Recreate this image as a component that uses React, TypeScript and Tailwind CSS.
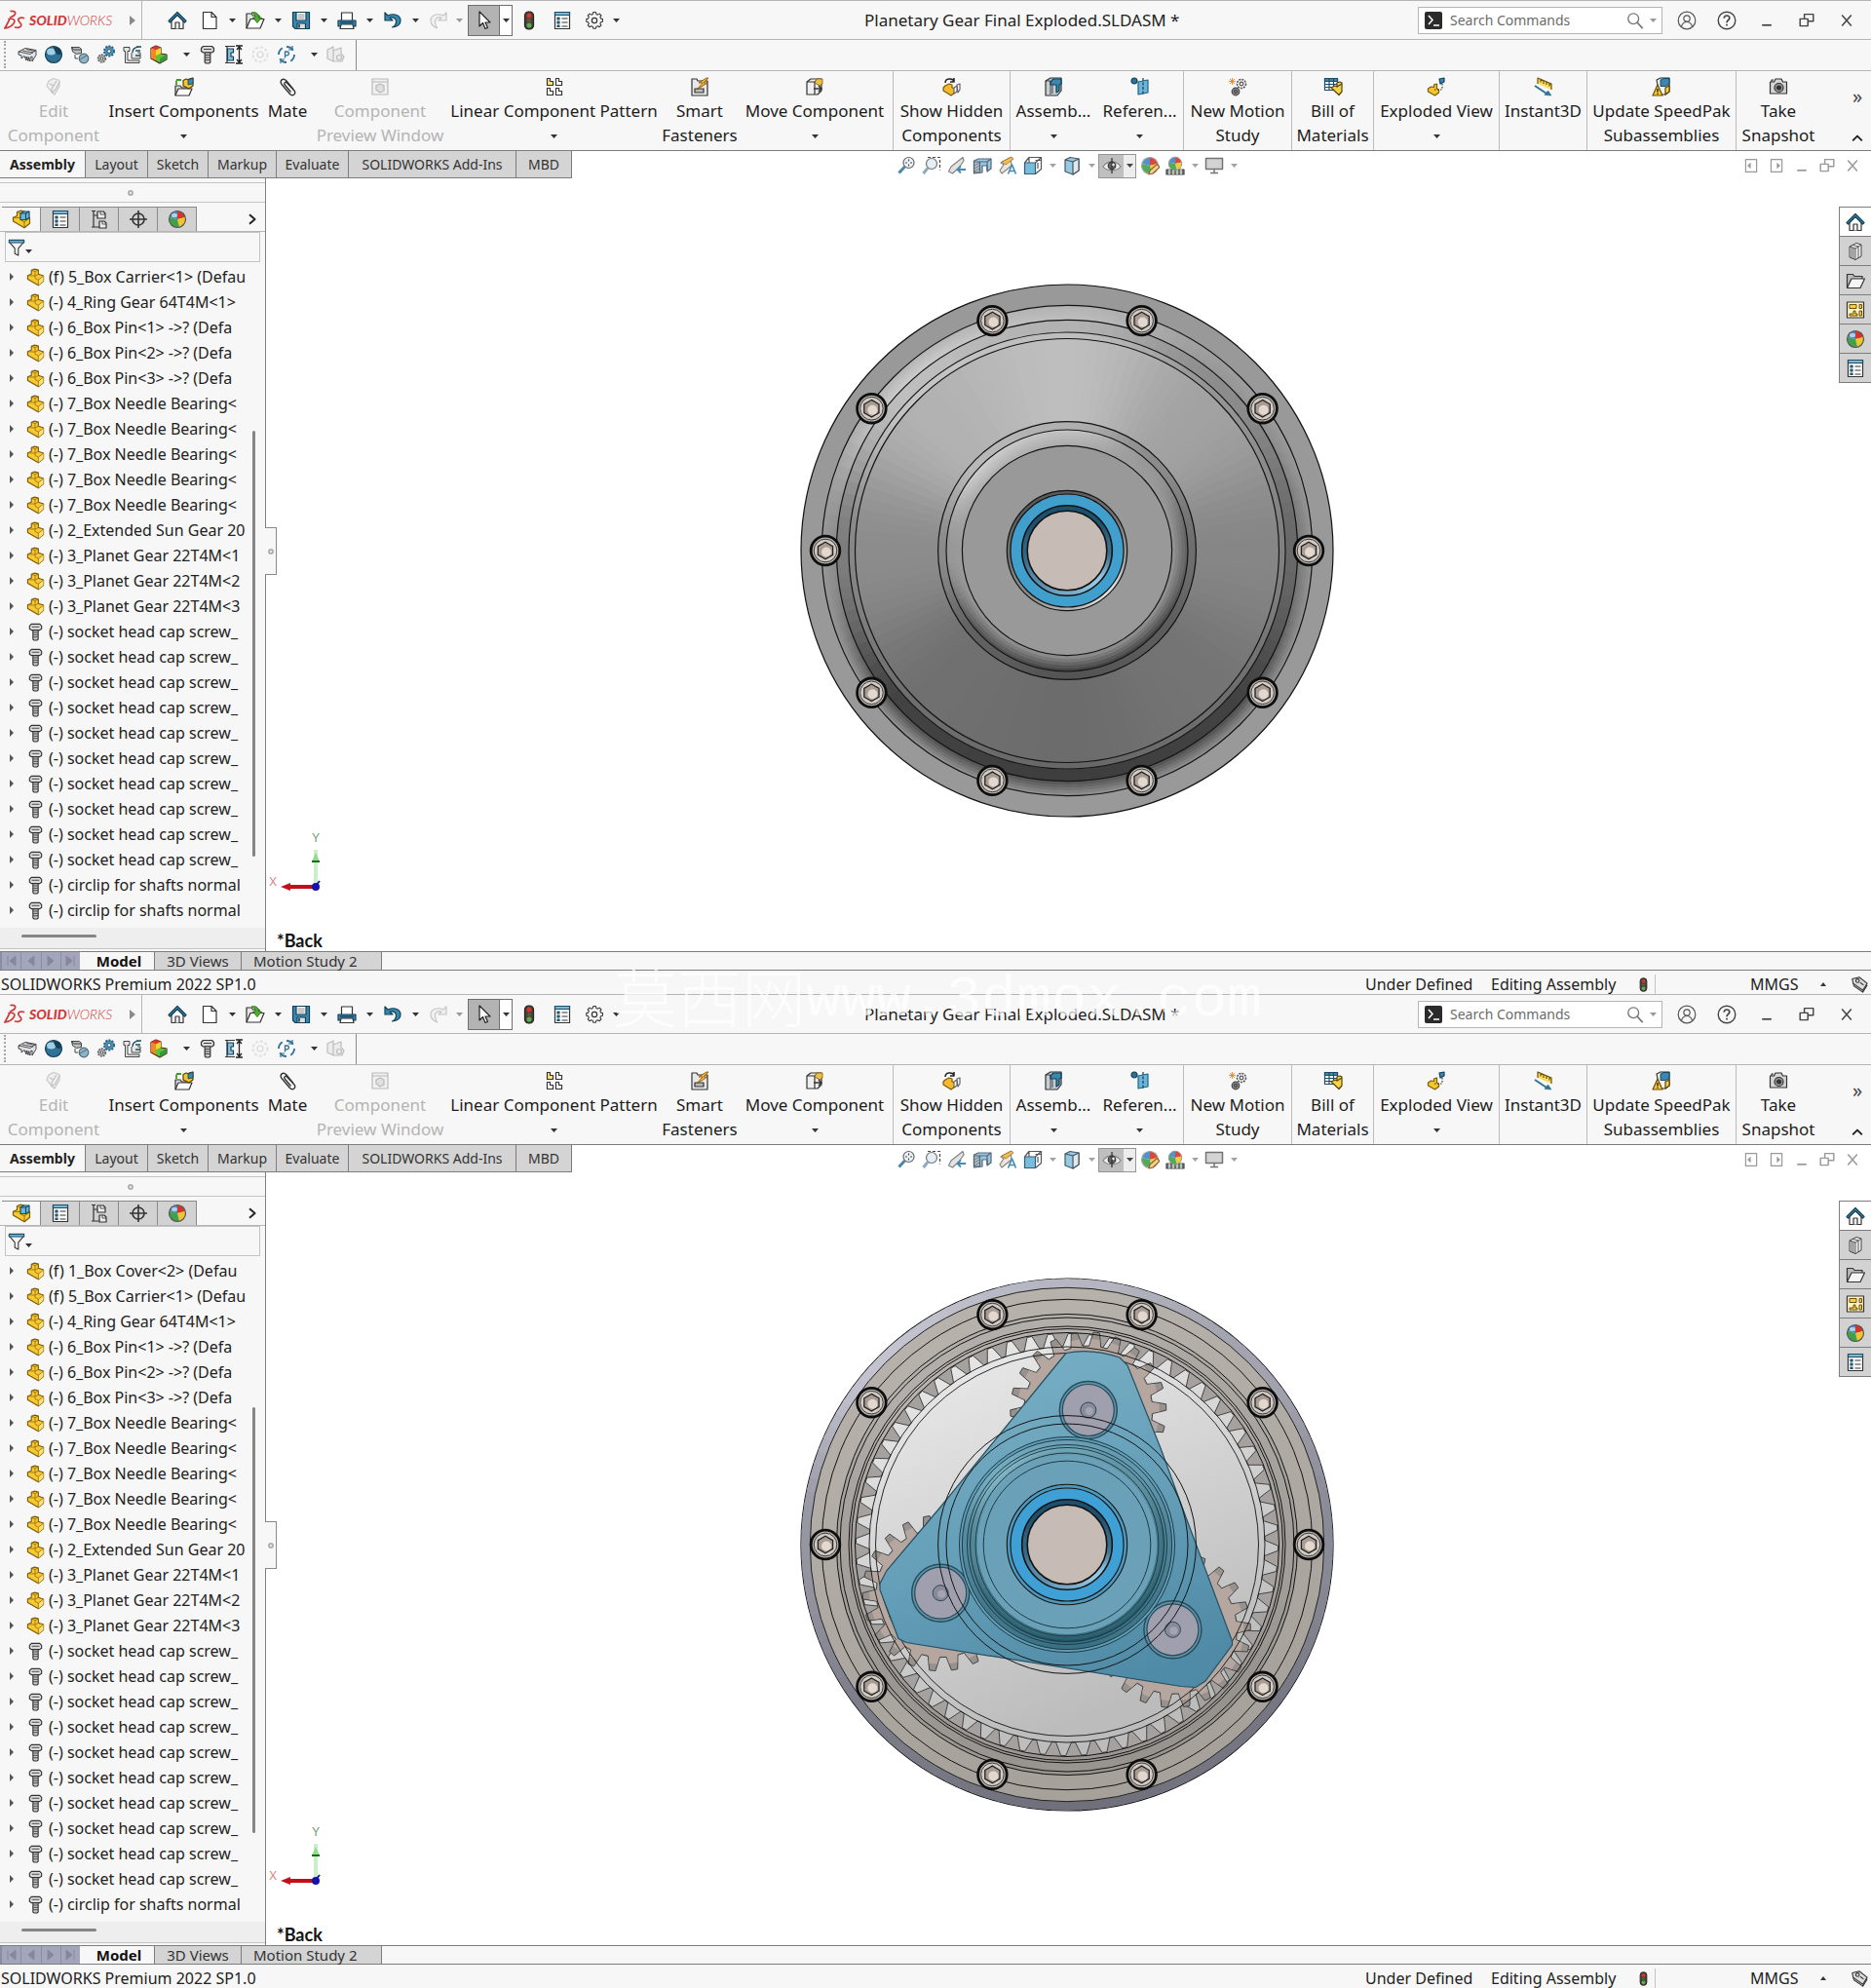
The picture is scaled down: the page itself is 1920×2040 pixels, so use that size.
import type { ReactNode } from "react";
import clsx from "clsx";

/* ---------- icons ---------- */

interface SvgProps {
  size?: number;
  children: ReactNode;
}

function Svg({ size = 20, children }: SvgProps) {
  return (
    <svg
      width={size}
      height={size}
      viewBox="0 0 20 20"
      fill="none"
      stroke="#333"
      strokeWidth="1.2"
      strokeLinejoin="round"
      className="shrink-0"
      aria-hidden="true"
    >
      {children}
    </svg>
  );
}

const partBody = "M5.5 2.5 9 1.2l4 1v4.3l5.5 2v5.7L13 18.8 1.500 12V8.2l4-1.7z";
const partEdges = "M5.500 2.500l4 1.300v4.700L1.500 8.200M9.500 3.800 13 2.200M9.500 8.500l4-2M13 18.800v-6L9.500 11V8.500M13 12.800l5.500-4.300";

const Part = ({ size = 19 }: { size?: number }) => (
  <Svg size={size}>
    <path d={partBody} fill="#f7c92f" stroke="#7d5a08" />
    <path d="M13 12.800l5.500-4.300v5.700L13 18.800z" fill="#fbe07a" stroke="none" />
    <path d={partEdges} stroke="#8f6a12" strokeWidth=".8" />
  </Svg>
);

const AssemblyPart = () => (
  <Svg size={20}>
    <path d={partBody} fill="#f7c92f" stroke="#7d5a08" />
    <path d={partEdges} stroke="#7d5a08" strokeWidth=".8" />
    <path d="M9 4l3.500-2H18v6.500l-3.500 2H9z" fill="#6fb7dc" stroke="#174a63" />
    <path d="M9 4h5.500v6.500M14.500 4 18 2" stroke="#174a63" />
  </Svg>
);

const Screw = ({ size = 20 }: { size?: number }) => (
  <Svg size={size}>
    <path d="M3.500 3.500 5.500 1.500h9l2 2v3l-2 1.500h-9l-2-1.500z" fill="#dadada" />
    <path d="M6 4.500h8" strokeWidth=".9" />
    <path d="M7.200 8h5.600v10l-1.300 1h-3l-1.300-1z" fill="#c9c9c9" />
    <path d="M7.500 10.500h5M7.500 13h5M7.500 15.500h5" strokeWidth=".9" />
  </Svg>
);

const Home = () => (
  <Svg>
    <path d="M4 10v8.500h12V10l-6-6z" fill="#fff" />
    <path d="M8 18.500V12h4v6.500" fill="#f1f1f1" />
    <path d="M1 10.500 10 1.500l9 9-1.500 1.500L10 4.500 2.500 12z" fill="#3f8fb5" stroke="#123f55" />
  </Svg>
);

const NewDoc = () => (
  <Svg>
    <path d="M3.500 1.500H12l5 5v12H3.500z" fill="#fff" />
    <path d="M12 1.500v5h5" />
  </Svg>
);

const OpenDoc = () => (
  <Svg>
    <path d="M1 18V3h5l1.500 2H14v4" fill="#e5e5e5" />
    <path d="M1 18 5 8.500h14L15 18z" fill="#fff" />
    <path d="M6 2c4-1 7 0 7.500 5h3L12 12.500 7.500 7H10C10 4 8.500 2.500 6 2z" fill="#4fae2c" stroke="#22640e" strokeWidth=".8" />
  </Svg>
);

const Save = () => (
  <Svg>
    <path d="M1.500 1.500h17v17H4l-2.500-2.500z" fill="#3a87b0" stroke="#123f55" />
    <path d="M5 1.500h10V10H5z" fill="#fff" stroke="#123f55" />
    <path d="M6.500 4h7M6.500 6h7M6.500 8h7" stroke="#777" strokeWidth=".8" />
    <path d="M6 13h8.500v5.500H6z" fill="#ddd" stroke="#123f55" />
    <path d="M8 14v3.500" stroke="#123f55" strokeWidth="1.600" />
  </Svg>
);

const Print = () => (
  <Svg>
    <path d="M4.500 10V2h11v8" fill="#fff" />
    <path d="M1 10h18v6H1z" fill="#3a87b0" stroke="#123f55" />
    <path d="M4 14h12l1 4.500H3z" fill="#fff" />
    <path d="M3 12h14" stroke="#123f55" />
  </Svg>
);

const Undo = () => (
  <Svg>
    <path d="M2 2v8h8L7 7.200c4-1 7 1 6.500 4.800-.3 2.500-2 4-4 5 5-.5 8.500-3 8.500-7C18 5 12 2 5 5z" fill="#3a87b0" stroke="#123f55" />
  </Svg>
);

const Redo = () => (
  <Svg>
    <path d="M18 2v8h-8l3-2.800c-4-1-7 1-6.500 4.800.3 2.500 1 4 2 6-4-1.500-6.500-4-6.500-8C2 5 8 2 15 5z" fill="#f0f0f0" stroke="#c6c6c6" />
  </Svg>
);

const Cursor = () => (
  <Svg>
    <path d="M5 1v15l3.500-3.500 2.500 6 2.500-1-2.500-5.500h5z" fill="#fff" stroke="#222" />
  </Svg>
);

const Traffic = ({ size = 20 }: { size?: number }) => (
  <Svg size={size}>
    <rect x="5.500" y="1" width="9" height="18" rx="4" fill="#4a4238" stroke="#222" />
    <circle cx="10" cy="5" r="2.500" fill="#d8342a" stroke="none" />
    <circle cx="10" cy="10" r="2" fill="#5f5640" stroke="none" />
    <circle cx="10" cy="15" r="2.500" fill="#58b04a" stroke="none" />
  </Svg>
);

const OptionList = () => (
  <Svg>
    <path d="M2.500 1.500h15v17h-15z" fill="#fff" />
    <path d="M2.500 1.500h15v3h-15z" fill="#7db9d6" stroke="#1d4e66" />
    <path d="M5 7h2v2H5zM5 11h2v2H5zM5 15h2v1.500H5z" fill="#3a87b0" stroke="#1d4e66" />
    <path d="M9.500 8h6M9.500 12h6M9.500 16h6" />
  </Svg>
);

const gearOutline =
  "M8.500 1.500h3l.5 2.200 1.800.8 2-1.200 2 2-1.200 2 .8 1.700 2.100.5v3l-2.100.5-.8 1.800 1.200 2-2 2-2-1.200-1.800.8-.5 2.100h-3l-.5-2.100-1.800-.8-2 1.200-2-2 1.200-2-.8-1.800L.5 12.500v-3L2.600 9l.8-1.700-1.200-2 2-2 2 1.200L8 3.700z";

const Gear = () => (
  <Svg>
    <path d={gearOutline} fill="#f3f3f3" transform="translate(1.300 .2) scale(.88)" />
    <circle cx="10" cy="10" r="2.600" fill="#fff" />
  </Svg>
);

const HeatSink = () => (
  <Svg>
    <path d="M1 7 8 3.500l11 2v5L15 17v-5l-2 1v4l-2-4.500v4L9 12v4l-2-4.500L4 14v-3L1 10z" fill="#dfe3e5" strokeWidth=".9" />
    <path d="M1 7l12 2.500 6-4M5 6l11 2M9 4.500 18 6.500" strokeWidth=".8" />
  </Svg>
);

const Sphere = () => (
  <Svg>
    <circle cx="10" cy="10" r="8.500" fill="#2f7197" stroke="#123f55" />
    <ellipse cx="7.500" cy="7" rx="4.500" ry="3.500" fill="#9fd0e6" stroke="none" />
    <path d="M10 2c5 0 8 3 8 7-3 3-7 0-8-7z" fill="#173f57" stroke="none" />
  </Svg>
);

const MassShapes = () => (
  <Svg>
    <path d="M1.500 2.500h8l2 2v4l-5 1-4-2.500z" fill="#b9c0c4" strokeWidth=".9" />
    <path d="M1.500 2.500l2 2.500h8" strokeWidth=".9" />
    <circle cx="14" cy="14" r="4.800" fill="#8fb4c6" stroke="#4d6d7c" />
    <path d="M10 15l7-4" stroke="#5d7d8c" />
    <path d="M5 10v4h3" strokeWidth=".9" />
  </Svg>
);

const TwoGears = () => (
  <Svg>
    <circle cx="13" cy="6.500" r="5" fill="#4b93b8" stroke="#2a6485" strokeWidth="2" strokeDasharray="2 1.200" />
    <circle cx="13" cy="6.500" r="1.800" fill="#fff" strokeWidth=".8" />
    <circle cx="5.500" cy="14" r="3.800" fill="#b3b3b3" stroke="#666" strokeWidth="1.800" strokeDasharray="1.800 1" />
    <circle cx="5.500" cy="14" r="1.300" fill="#fff" strokeWidth=".8" />
  </Svg>
);

const Clamp = () => (
  <Svg>
    <path d="M1 2.500h6v4H5V16h12v2.500H2.500V6.500H1zM9 8v6h9V8h-3" fill="#e6e6e6" strokeWidth=".9" />
    <path d="M18 2c-5 0-8 2-8 6M14 2h5M18 6h-5M18 11h-5" stroke="#1d4e66" strokeWidth="1.400" />
  </Svg>
);

const RainbowPart = () => (
  <Svg>
    <path d="M2 3.500 7 1l5 2v6l6 1v5l-7 4-9-5z" fill="#5fc23a" stroke="#5e1c10" />
    <path d="M2 3.500 7 1l5 2-5 2.500z" fill="#e4342a" stroke="none" />
    <path d="M2 3.500l5 2V16l-5-2.500z" fill="#f08b24" stroke="none" />
    <path d="M7 5.500 12 3v6l-5 2z" fill="#f3d52d" stroke="none" />
    <path d="M11 14l7-4v5l-7 4z" fill="#2f9a3a" stroke="none" />
  </Svg>
);

const FitHeight = () => (
  <Svg>
    <path d="M1 1.500h10M1 18.500h10M3 1.500v17" />
    <path d="M3.500 4h6v4H7v4h2.500v4h-6z" fill="#8cc0da" stroke="#123f55" />
    <path d="M15.500 2v16M13 5l2.500-3 2.500 3M13 15l2.500 3 2.500-3M12 1h7M12 19h7" stroke="#222" strokeWidth="1.300" />
  </Svg>
);

const FaintPlate = () => (
  <Svg>
    <circle cx="10" cy="10" r="7.500" stroke="#e0e0e0" strokeDasharray="3 2" strokeWidth="2" />
    <circle cx="10" cy="10" r="3" stroke="#d6d6d6" />
  </Svg>
);

const CycleP = () => (
  <Svg>
    <circle cx="10" cy="10" r="8" stroke="#2f7197" strokeWidth="1.800" strokeDasharray="8 4.500" />
    <path d="M8.500 13.500V7h2a1.800 1.800 0 0 1 0 3.800h-2" stroke="#2f7197" strokeWidth="1.300" />
    <path d="M16 1v4h-4M4 19v-4h4" stroke="#2f7197" />
  </Svg>
);

const FaintPart = () => (
  <Svg>
    <path d="M2 5l6-3v15l-6-3zM8 6l8-3v6l3 3-2 5H8z" fill="#ececec" stroke="#bdbdbd" />
    <circle cx="14" cy="13" r="2.500" stroke="#bdbdbd" />
  </Svg>
);

const EditPart = () => (
  <Svg>
    <path d="M5 4l5-2.500 6 2v6L11 18l-5-5-3-4z" fill="#efefef" stroke="#c9c9c9" />
    <path d="M13 4l-5 8v4l4-3 4-8M6 7l4 2" stroke="#c0c0c0" />
  </Svg>
);

const InsertPart = () => (
  <Svg>
    <path d="M1 19V9h5l1.500 2H15v3" fill="#ddd" />
    <path d="M1 19l3-7h14l-3 7z" fill="#fff" />
    <path d="M9 3.500 12 2l3 1V2l4-1v8l-4 3-6-3z" fill="#f5c62c" stroke="#5b4205" />
    <path d="M14 3l5-2v6l-5 1z" fill="#3a87b0" stroke="#123f55" strokeWidth=".8" />
    <path d="M2 8V3.500M2 3h5" stroke="#3f9a25" strokeWidth="1.800" />
  </Svg>
);

const Clip = () => (
  <Svg>
    <path
      d="M16 12.500 8.500 3.500C5.500.500 1.500 3.500 4 7.500l8.500 10c3 3 7-.5 4.500-3.500L9.500 6C8 4.500 6 6 7.200 8l6.300 7.500"
      stroke="#333"
      strokeWidth="1.400"
    />
  </Svg>
);

const PreviewWin = () => (
  <Svg>
    <path d="M2 2h16v16H2zM2 5h16" fill="#f0f0f0" stroke="#b9b9b9" />
    <path d="M6 9l4-2 4 2v5l-4 2-4-3z" fill="#e0e0e0" stroke="#b9b9b9" />
  </Svg>
);

const Pattern = () => (
  <Svg>
    <path d="M2.500 1.500h3v3h3v4h-6z" fill="#ffe37a" />
    <path d="M11.500 1.500h3v3h3v4h-6zM2.500 11.500h3v3h3v4h-6zM11.500 11.500h3v3h3v4h-6z" fill="#fff" />
  </Svg>
);

const SmartFast = () => (
  <Svg>
    <path d="M2 2h5l1 2h10v15H2z" fill="#e8e8e8" />
    <path d="M5 12h9v4H5z" fill="#bbb" />
    <path d="M17 1 9 6h4l-6 7 11-7h-4l5-5z" fill="#f5b82c" stroke="#7d4a08" strokeWidth=".8" />
  </Svg>
);

const MovePart = () => (
  <Svg>
    <path d="M2 5l4-3h11v12l-4 4H2z" fill="#efefef" />
    <path d="M2 5h8v13M10 5l4-3" />
    <path d="M12 2h6v5l-3 2-5-3z" fill="#e9bf45" stroke="#7d5a08" strokeWidth=".8" />
    <path d="M9 12h8M14 9l3 3-3 3" strokeWidth="1.500" />
  </Svg>
);

const ShowHidden = () => (
  <Svg>
    <path d="M3 9l4-2 3 1v3l3 1v4l-4 3-8-5v-3z" fill="#f5b92c" stroke="#7d5a08" />
    <path d="M12 11l3-2v6l-3 2zM15 8l3-1v6l-2 3z" fill="#fff" stroke="#666" />
    <path d="M3 6c0-5 7-5 9-2M12 1v4H8" strokeWidth="1.500" stroke="#222" />
  </Svg>
);

const AsmFeature = () => (
  <Svg>
    <path d="M2 4l5-3h11v13l-4 5H2z" fill="#c6cfd4" />
    <path d="M7 5l3-3h8v5l-2 1v6l-3 2V8H7z" fill="#3a87b0" stroke="#123f55" />
    <path d="M2 4h5v14M9 8v9" strokeWidth=".9" />
  </Svg>
);

const RefGeom = () => (
  <Svg>
    <circle cx="4" cy="4" r="3" fill="#2f7197" stroke="#123f55" />
    <path d="M8 5l10-2v13L8 18z" fill="#6cb5d8" stroke="#1d6488" />
    <path d="M13 1v18" stroke="#123f55" strokeDasharray="3 1.500" />
  </Svg>
);

const Motion = () => (
  <Svg>
    <circle cx="14" cy="7" r="4.500" fill="#f4f4f4" stroke="#555" strokeWidth="1.600" strokeDasharray="2 1" />
    <circle cx="14" cy="7" r="1.800" stroke="#555" />
    <circle cx="8" cy="15" r="3.800" fill="#888" stroke="#444" />
    <circle cx="8" cy="15" r="1.300" fill="#ddd" />
    <path d="M4.500 1v7M1 4.500h7M2 2l5 5M7 2 2 7" stroke="#e08830" strokeWidth=".9" />
  </Svg>
);

const Bom = () => (
  <Svg>
    <path d="M1.500 1.500h13v12h-13z" fill="#fff" stroke="#1d4e66" />
    <path d="M1.500 1.500h13v3h-13z" fill="#3a87b0" stroke="#1d4e66" />
    <path d="M6 1.500v12M10.500 1.500v12M1.500 7.500h13M1.500 10.500h13" stroke="#1d4e66" />
    <path d="M8 11l4-2 2 1V6l3-1 2 1v9l-3 3.500z" fill="#f5d24c" stroke="#5b4205" />
    <path d="M14 10l5-3" stroke="#5b4205" />
  </Svg>
);

const Exploded = () => (
  <Svg>
    <path d="M1.500 12l3-2 3 .5V8l3-1v5l2 1v3l-4 3-7-4z" fill="#f5c62c" stroke="#7d5a08" />
    <path d="M13 2l5-1v4l-4 2z" fill="#3a87b0" stroke="#123f55" />
    <path d="M16 7v6M8 13h9" strokeDasharray="1.500 1.500" />
  </Svg>
);

const Instant = () => (
  <Svg>
    <path d="M4 1l14 6v6L4 7z" fill="#fbdc62" stroke="none" />
    <path d="M4 7V1l14 6v6M7 2.500v3M10 4v3M13 5v3M16 6.500v3" stroke="#6b5208" />
    <path d="M1 9l12 8" stroke="#2f7197" strokeWidth="2" />
    <path d="M18 19l-7-.5 3.500-4.500z" fill="#2f7197" stroke="#2f7197" strokeWidth=".6" />
  </Svg>
);

const SpeedPak = () => (
  <Svg>
    <path d="M5 3l4-2h9v14l-4 3H8z" fill="#f1f3f4" />
    <path d="M9 3l3-1.500h6v6l-4 2H9z" fill="#3a87b0" stroke="#123f55" strokeWidth=".9" />
    <path d="M14 11l4-2v6l-4 3z" fill="#f5d24c" stroke="#5b4205" />
    <path d="M6 8 1 19h10z" fill="#f8c93c" stroke="#6b4a00" />
    <path d="M6 12v3.500M6 16.500v1.200" strokeWidth="1.400" stroke="#222" />
  </Svg>
);

const Camera = () => (
  <Svg>
    <path d="M1.500 5h4l1.500-3h6l1.500 3h4v12h-17z" fill="#d5d5d5" />
    <circle cx="10.500" cy="11" r="4.500" fill="#999" />
    <circle cx="10.500" cy="11" r="2" fill="#333" />
    <path d="M3 5V3h2" />
  </Svg>
);

const ZoomFit = () => (
  <Svg>
    <circle cx="12.500" cy="7" r="5.500" fill="#e9f3f8" stroke="#555" />
    <path d="M8.500 11 2.500 17.500" stroke="#3a7a9c" strokeWidth="3" />
    <path d="M12.500 3.500v2M12.500 8.500v2M9 7h2M14 7h2" />
  </Svg>
);

const ZoomArea = () => (
  <Svg>
    <path d="M6 1.500h12.500v13" strokeDasharray="3 2" />
    <circle cx="10" cy="8" r="5.500" fill="#e3edf3" stroke="#666" />
    <path d="M6 12.500 1.500 18" stroke="#7fa3b8" strokeWidth="3" />
  </Svg>
);

const PrevView = () => (
  <Svg>
    <path d="M16 1.500 4 11l-2.500 5 4 2L12 12l5-7z" fill="#e1e1e1" stroke="#777" />
    <path d="M19 14h-8M14 10.500 10.500 14l3.500 3.500" stroke="#2f7fa8" strokeWidth="1.800" />
  </Svg>
);

const Section = () => (
  <Svg>
    <path d="M1.500 5 6 3h13v10l-4 3v-6h-5v7l-8.500 1z" fill="#8cc4df" stroke="#456" />
    <path d="M1.500 6h6v11h-6z" fill="#a9b8c0" stroke="#456" />
    <path d="M2 10l5-3M2 13l5-3M2 16l5-3" stroke="#456" strokeWidth=".7" />
    <path d="M7.500 6H15l4-3M15 6v9" stroke="#456" />
  </Svg>
);

const Annot = () => (
  <Svg>
    <path d="M13 1.500 3 7l3 2-4 6 2 3 10-8z" fill="#ece5d6" stroke="#777" />
    <path d="M4 6l10-5 2 2-8 6z" fill="#f0b540" stroke="#8a6414" strokeWidth=".8" />
    <path d="M10.500 18.500 14.500 9l4 9.500M12 15.500h5" stroke="#2f7fa8" strokeWidth="1.600" />
  </Svg>
);

const Orient = () => (
  <Svg>
    <path d="M1.500 7h11v11.500h-11z" fill="#6cb5d8" stroke="#1d4e66" />
    <path d="M1.500 7 6 1.500h12.500v12l-6 5M12.500 7l6-5.500M6 1.500V7M12.500 4.500h6M15 7v6" stroke="#444" />
  </Svg>
);

const Display = () => (
  <Svg>
    <path d="M3 4l5-2.500 9 1.500v12l-6 4-8-3z" fill="#8cc4df" stroke="#345" />
    <path d="M11 6l6-3v12l-6 4z" fill="#dfe7eb" stroke="#345" />
    <path d="M3 4l8 2" stroke="#345" />
  </Svg>
);

const Eye = () => (
  <Svg>
    <path d="M1 11c4-6.500 14-6.500 18 0-4 5-14 5-18 0z" fill="#eee" stroke="#777" />
    <circle cx="10" cy="10" r="3.800" fill="#555" stroke="#222" />
    <path d="M10 2v16" stroke="#222" strokeWidth="1.300" />
    <circle cx="11.500" cy="9" r="1.200" fill="#fff" stroke="none" />
  </Svg>
);

const ballQuadrants = (
  <>
    <path d="M10 10V1.500A8.500 8.500 0 0 0 2 8z" fill="#3f86c8" stroke="none" />
    <path d="M10 10V1.500A8.500 8.500 0 0 1 18 8z" fill="#d6342b" stroke="none" />
    <path d="M10 10 18 8a8.500 8.500 0 0 1-6 10.300z" fill="#f1c52c" stroke="none" />
    <path d="M10 10 2 8a8.500 8.500 0 0 0 10 10.300z" fill="#3fa24a" stroke="none" />
  </>
);

const Ball = () => (
  <Svg>
    {ballQuadrants}
    <circle cx="10" cy="10" r="8.500" stroke="#555" />
    <ellipse cx="7" cy="6" rx="3" ry="2.200" fill="#fff" fillOpacity=".6" stroke="none" />
  </Svg>
);

const BallPencil = () => (
  <Svg>
    {ballQuadrants}
    <circle cx="10" cy="10" r="8.500" stroke="#999" />
    <path d="M17.500 8.500 10 15l-1 4 4-1 7-6.500z" fill="#f1cf8a" stroke="#8a5414" />
  </Svg>
);

const BallScene = () => (
  <Svg>
    <path d="M1 14h18v5H1z" fill="#5f6b5f" />
    <path d="M4 14v5M8 14v5M12 14v5M16 14v5" stroke="#eee" />
    <g transform="translate(2 0) scale(.8)">
      {ballQuadrants}
      <circle cx="10" cy="10" r="8.500" stroke="#888" />
    </g>
  </Svg>
);

const Monitor = () => (
  <Svg>
    <path d="M1.500 2.500h17v11h-17z" fill="#cfcfcf" stroke="#666" strokeWidth="1.500" />
    <path d="M10 13.500V17M6 17.500h8" stroke="#666" strokeWidth="1.500" />
  </Svg>
);

const ConfigTree = () => (
  <Svg>
    <path d="M4 1v17h6M4 6h4M2 1.500h4M2 18h3" />
    <path d="M8 2h6l2 2v5H8zM10 12h5l2 2v5h-7z" fill="#eee" />
    <path d="M11 2v3h5M13 12v3h4" strokeWidth=".8" />
  </Svg>
);

const Target = () => (
  <Svg>
    <circle cx="10" cy="10" r="6" strokeWidth="1.600" />
    <path d="M10 1v18M1 10h18" strokeWidth="1.600" />
  </Svg>
);

const Library = () => (
  <Svg>
    <path d="M4 5l7-3.500 5 1.500v12l-6 3.500-6-2.500z" fill="#f1f1f1" strokeWidth=".9" />
    <path d="M10 7v11.500M4 5l6 2 6-4M7 3.500 13 5v12M6 6v10.500M8 6.500v11" strokeWidth=".8" />
  </Svg>
);

const Folder = () => (
  <Svg>
    <path d="M1.500 17V3.500h6l1.500 2h8V9" fill="#bbb" />
    <path d="M1.500 17.500 6 8h13.500L15 17.500z" fill="#f5f5f5" />
  </Svg>
);

const Palette = () => (
  <Svg>
    <path d="M1.500 2h17v16h-17z" fill="#fff3c4" />
    <path d="M4 4.500h7v4H4zM14 4.500h2.500v4H14zM8 11v3H4v2h8v-2h-2v-3zM14 11h2.500v5H14z" fill="#f3cf45" stroke="#5b4205" strokeWidth=".9" />
  </Svg>
);

const Filter = () => (
  <Svg size={18}>
    <path d="M1.500 3.500h17L12 11v8l-4-2v-6z" fill="#f4f4f4" />
    <path d="M1.500 1.500h17v3h-17z" fill="#6cb5d8" stroke="#1d4e66" />
  </Svg>
);

const User = () => (
  <Svg>
    <circle cx="10" cy="10" r="8.800" stroke="#555" />
    <circle cx="10" cy="8" r="3.200" stroke="#555" />
    <path d="M4.500 16c1-3 2.500-4.500 5.500-4.500s4.500 1.500 5.500 4.500" stroke="#555" />
  </Svg>
);

const Help = () => (
  <Svg>
    <circle cx="10" cy="10" r="8.800" stroke="#444" strokeWidth="1.400" />
    <path d="M7.200 7.800c0-3.800 5.800-3.600 5.600-.2-.1 2-2.800 2-2.800 4.600M10 13.800v1.600" stroke="#444" strokeWidth="1.700" />
  </Svg>
);

const Minimize = ({ color }: { color: string }) => (
  <Svg size={16}>
    <path d="M4 16h12" stroke={color} strokeWidth="2.200" />
  </Svg>
);

const Restore = ({ color }: { color: string }) => (
  <Svg size={16}>
    <path d="M1.500 8h10v9h-10zM7 8V2h11.500v9h-7" stroke={color} strokeWidth="1.800" />
  </Svg>
);

const Close = ({ color }: { color: string }) => (
  <Svg size={16}>
    <path d="M4 3l12 14M16 3 4 17" stroke={color} strokeWidth="1.900" />
  </Svg>
);

const Dock = ({ flip }: { flip?: boolean }) => (
  <Svg size={16}>
    <g transform={flip ? "translate(20 0) scale(-1 1)" : undefined}>
      <path d="M3 2h14v16H3z" stroke="#999" strokeWidth="1.500" />
      <path d="M9.500 6v8L5 10z" fill="#999" stroke="none" />
    </g>
  </Svg>
);

const Tag = () => (
  <Svg size={18}>
    <path d="M2 4l8-2 9 7-5 8-11-8z" fill="#ddd" />
    <path d="M3 9l1 3 10 7 5-8" />
    <circle cx="8" cy="6" r="2" />
    <path d="M11 8l4 3" />
  </Svg>
);

const Brand = () => (
  <svg width="22" height="22" viewBox="0 0 22 22" fill="none" stroke="#cf3a3a" strokeWidth="1.700" strokeLinecap="round" aria-hidden="true">
    <path d="M7 1.500c3.500-.5 5.500 1 4.500 3-.8 1.600-3 2.600-5 3.500" />
    <path d="M5 9.500c5.500-1 7 1.500 5 4.500-1.800 2.500-5 4.500-9 5L5.500 10.500" />
    <path d="M20.500 8.500c-3.500-1-6.500.3-5.500 2.800.8 2 3.300 2.700 2.800 4.700-.6 2.200-3.800 2.800-6.300 2" />
  </svg>
);

function Caret({ className, faint }: { className?: string; faint?: boolean }) {
  return (
    <span className={clsx("flex items-center", className ?? "w-[23px] justify-center")}>
      <svg width="7" height="4" viewBox="0 0 7 4" aria-hidden="true">
        <path d="M0 0h7L3.500 4z" fill={faint ? "#999" : "#333"} />
      </svg>
    </span>
  );
}

/* ---------- model drawings ---------- */

const polar = (r: number, deg: number) => {
  const a = (deg * Math.PI) / 180;
  return [r * Math.sin(a), -r * Math.cos(a)];
};

const point = (r: number, deg: number) =>
  polar(r, deg)
    .map((n) => n.toFixed(2))
    .join(" ");

// eight grey levels, clockwise from twelve o'clock
const level = (stops: number[], deg: number) => {
  const t = deg / 45;
  const i = Math.floor(t) % 8;
  const f = (1 - Math.cos((t - Math.floor(t)) * Math.PI)) / 2;
  return stops[i] * (1 - f) + stops[(i + 1) % 8] * f;
};

interface ShadeProps {
  outer: number;
  inner: number;
  from: number[];
  to?: number[];
  steps?: number;
  tint?: number[];
}

function Shade({ outer, inner, from, to = from, steps = 1, tint = [0, 0, 0] }: ShadeProps) {
  const arcs: ReactNode[] = [];
  const width = (outer - inner) / steps;
  for (let s = 0; s < steps; s++) {
    const r = outer - width * (s + 0.5);
    const f = (s + 0.5) / steps;
    for (let d = 0; d < 360; d += 3) {
      const v = level(from, d + 1.5) * (1 - f) + level(to, d + 1.5) * f;
      const [cr, cg, cb] = tint.map((t) => Math.round(v + t));
      arcs.push(
        <path
          key={`${s}-${d}`}
          d={`M${point(r, d - 0.4)}A${r} ${r} 0 0 1 ${point(r, d + 3.4)}`}
          stroke={`rgb(${cr},${cg},${cb})`}
          strokeWidth={width + 0.6}
          fill="none"
        />,
      );
    }
  }
  return <g>{arcs}</g>;
}

function Rings({ radii, width = 1 }: { radii: number[]; width?: number }) {
  return (
    <g fill="none" stroke="#141414" strokeWidth={width}>
      {radii.map((r) => (
        <circle key={r} r={r} />
      ))}
    </g>
  );
}

function Bolts() {
  return (
    <g>
      {Array.from({ length: 10 }, (_, i) => {
        const [x, y] = polar(248, 18 + i * 36);
        return (
          <g key={i} transform={`translate(${x.toFixed(1)} ${y.toFixed(1)})`}>
            <circle r="14.800" fill="#b7b1ac" stroke="#0d0d0d" strokeWidth="2.800" />
            <circle r="11.800" fill="#d2cbc5" stroke="#3d3a38" strokeWidth="1" />
            <path d="M0-8.800 7.600-4.400v8.800L0 8.800l-7.600-4.400v-8.800z" fill="#a89c93" stroke="#222" strokeWidth="1.300" />
            <circle cx="1" cy="1.500" r="5" fill="#e3d8d0" />
          </g>
        );
      })}
    </g>
  );
}

const teeth = (count: number, root: number, tip: number, rootShare: number, tipShare: number, phase = 0) => {
  const pitch = 360 / count;
  let d = "";
  for (let i = 0; i < count; i++) {
    const c = phase + i * pitch;
    d += `${i ? "L" : "M"}${point(root, c - pitch * rootShare)}`;
    d += `L${point(tip, c - pitch * tipShare)}L${point(tip, c + pitch * tipShare)}`;
    d += `L${point(root, c + pitch * rootShare)}`;
  }
  return d + "z";
};

function Hub() {
  return (
    <g>
      <circle r="46.300" fill="#2f8fbf" />
      <Shade outer={46.3} inner={40.8} from={[60, 60, 90, 180, 150, 120, 80, 60]} tint={[-30, 20, 50]} />
      <Rings radii={[46.3]} width={1.6} />
      <circle r="40.800" fill="#c6bbb5" stroke="#111" strokeWidth="1.600" />
    </g>
  );
}

function CoverModel() {
  return (
    <svg width="590" height="590" viewBox="-295 -295 590 590" role="img" aria-label="Gearbox cover, back view">
      <circle r="273" fill="#999" stroke="#111" strokeWidth="1.200" />
      <Shade
        outer={251.7}
        inner={236.6}
        from={[178, 158, 150, 146, 150, 150, 152, 180]}
        to={[190, 150, 120, 78, 82, 80, 140, 205]}
        steps={5}
      />
      <Shade outer={236.6} inner={224} from={[178, 140, 105, 66, 62, 66, 125, 190]} />
      <Shade outer={224} inner={217.5} from={[190, 148, 128, 110, 104, 110, 134, 196]} />
      <Shade outer={217.5} inner={132.4} from={[190, 162, 134, 116, 108, 112, 140, 178]} />
      <Shade outer={132.4} inner={124} from={[176, 140, 110, 92, 84, 96, 138, 184]} />
      <Shade
        outer={124}
        inner={107.6}
        from={[196, 150, 92, 64, 60, 78, 150, 208]}
        to={[172, 156, 150, 150, 146, 150, 156, 176]}
        steps={5}
      />
      <circle r="107.600" fill="#999" />
      <Rings radii={[251.7, 236.6, 224, 217.5, 132.4, 124, 107.6]} width={1.2} />
      <Shade outer={61.7} inner={58} from={[90, 110, 150, 225, 180, 140, 110, 90]} />
      <circle r="58" fill="#409fcd" />
      <Rings radii={[61.7, 58]} width={1.2} />
      <Hub />
      <Bolts />
    </svg>
  );
}

const planets = [
  { x: 21.8, y: -138 },
  { x: 108.4, y: 87.3 },
  { x: -129.8, y: 49.7 },
];

function GearModel() {
  return (
    <svg width="590" height="590" viewBox="-295 -295 590 590" role="img" aria-label="Planetary gear set, back view">
      <defs>
        <linearGradient id="inside" x1="0" y1="0" x2=".4" y2="1">
          <stop offset="0" stopColor="#ececec" />
          <stop offset="1" stopColor="#bcbcbc" />
        </linearGradient>
        <linearGradient id="face" x1="0" y1="0" x2=".3" y2="1">
          <stop offset="0" stopColor="#bab4ae" />
          <stop offset="1" stopColor="#a7a19b" />
        </linearGradient>
        <linearGradient id="carrier" x1=".3" y1="0" x2=".7" y2="1">
          <stop offset="0" stopColor="#78afc5" />
          <stop offset=".5" stopColor="#659fb8" />
          <stop offset="1" stopColor="#4f8aa6" />
        </linearGradient>
      </defs>
      <circle r="273" fill="#999" stroke="#111" strokeWidth="1.200" />
      <Shade outer={272.5} inner={263.7} from={[182, 164, 138, 118, 112, 124, 150, 196]} tint={[0, 0, 12]} />
      <circle r="263.700" fill="url(#face)" stroke="#222" />
      <Shade outer={236.6} inner={224} from={[174, 166, 158, 146, 148, 150, 160, 174]} tint={[4, 0, -5]} />
      <Shade outer={224} inner={217.5} from={[178, 168, 160, 150, 150, 152, 162, 178]} tint={[4, 0, -5]} />
      <circle r="217.500" fill="#a5a19e" />
      <path d={teeth(64, 203, 216.5, 0.4, 0.12, 1)} fill="url(#inside)" stroke="#444" />
      <circle r="202" fill="url(#inside)" />

      {planets.map((p, i) => (
        <g key={i} transform={`translate(${p.x} ${p.y})`}>
          <path d={teeth(22, 66, 80, 0.32, 0.14, 6)} fill="#98928f" stroke="#444" />
          <path d={teeth(22, 65, 73, 0.3, 0.2, 6)} fill="#b5a79f" />
        </g>
      ))}
      <Rings radii={[203, 196.5]} width={0.9} />
      <Rings radii={[251.7, 236.6, 233, 224, 221.5, 217.5]} width={1} />

      {/* carrier plate: one flat corner per planet */}
      <path
        d="M-8-188-1-196.500Q24-202 54-192L62-184 96-99 122-28 169.500 99v4L142 140l-10 6.500-15-1L-165 100.500l-8-4-19-50V40l7-13.500 55-65z"
        fill="url(#carrier)"
        stroke="#264f61"
        strokeWidth="1.200"
      />
      {planets.map((p, i) => (
        <g key={i} transform={`translate(${p.x} ${p.y})`} stroke="#294a58">
          <circle r="29.500" fill="#5b93a9" strokeWidth="1.400" />
          <circle r="26.500" fill="#9f9fae" strokeWidth="1.200" />
          <circle r="8" fill="#8a8a98" />
          <circle cx="1" cy="1" r="4" fill="#a4a4b2" stroke="none" />
        </g>
      ))}

      <circle r="110.500" fill="#629db5" />
      <Shade outer={107.6} inner={100} from={[138, 130, 110, 96, 90, 98, 116, 150]} tint={[-32, 22, 42]} />
      <Shade
        outer={100}
        inner={92}
        from={[150, 125, 84, 62, 56, 70, 108, 170]}
        to={[132, 124, 108, 96, 92, 98, 120, 140]}
        tint={[-30, 22, 38]}
        steps={3}
      />
      <circle r="92" fill="#6aa1b8" />
      <g fill="none" stroke="#1d3b48" strokeWidth="1">
        <circle r="110.500" />
        <circle r="107.600" />
        <circle r="102.500" />
        <circle r="99.500" />
        <circle r="94" />
        <circle r="85.800" />
      </g>
      <Rings radii={[132.4, 124]} width={1} />
      <circle r="61.700" fill="#4d99be" />
      <circle r="58" fill="#3fa0d6" />
      <Rings radii={[61.7, 58]} width={1.1} />
      <Hub />
      <Bolts />
    </svg>
  );
}

function Triad() {
  return (
    <svg width="56" height="58" viewBox="0 0 56 58" aria-hidden="true">
      <path d="M44 10v38" stroke="#c9f0c9" strokeWidth="4" />
      <path d="M40 22h8l-4-9z" fill="#8fdc8f" />
      <path d="M40 22h8" stroke="#1b6b1b" strokeWidth="2" />
      <path d="M14 48h28" stroke="#c40f1b" strokeWidth="4" />
      <path d="M8 48l10-4v8z" fill="#c40f1b" />
      <circle cx="44" cy="48" r="4" fill="#1414a8" />
      <path d="M44 47l4-5" stroke="#1414a8" strokeWidth="2" />
    </svg>
  );
}

/* ---------- data ---------- */

interface Command {
  label: [string, string?];
  icon: ReactNode;
  width: string;
  menu?: boolean;
  divider?: boolean;
  disabled?: boolean;
}

const commands: Command[] = [
  { label: ["Edit", "Component"], icon: <EditPart />, width: "w-[110px]", disabled: true },
  { label: ["Insert Components"], icon: <InsertPart />, width: "w-[157px]", menu: true },
  { label: ["Mate"], icon: <Clip />, width: "w-[56px]" },
  { label: ["Component", "Preview Window"], icon: <PreviewWin />, width: "w-[134px]", disabled: true },
  { label: ["Linear Component Pattern"], icon: <Pattern />, width: "w-[223px]", menu: true },
  { label: ["Smart", "Fasteners"], icon: <SmartFast />, width: "w-[76px]" },
  { label: ["Move Component"], icon: <MovePart />, width: "w-[161px]", menu: true, divider: true },
  { label: ["Show Hidden", "Components"], icon: <ShowHidden />, width: "w-[120px]", divider: true },
  { label: ["Assemb..."], icon: <AsmFeature />, width: "w-[88px]", menu: true },
  { label: ["Referen..."], icon: <RefGeom />, width: "w-[90px]", menu: true, divider: true },
  { label: ["New Motion", "Study"], icon: <Motion />, width: "w-[111px]", divider: true },
  { label: ["Bill of", "Materials"], icon: <Bom />, width: "w-[84px]", divider: true },
  { label: ["Exploded View"], icon: <Exploded />, width: "w-[129px]", menu: true, divider: true },
  { label: ["Instant3D"], icon: <Instant />, width: "w-[90px]", divider: true },
  { label: ["Update SpeedPak", "Subassemblies"], icon: <SpeedPak />, width: "w-[153px]", divider: true },
  { label: ["Take", "Snapshot"], icon: <Camera />, width: "w-[86px]" },
];

const commandTabs = [
  { label: "Assembly", width: "w-[88px]" },
  { label: "Layout", width: "w-[64px]" },
  { label: "Sketch", width: "w-[62px]" },
  { label: "Markup", width: "w-[70px]" },
  { label: "Evaluate", width: "w-[74px]" },
  { label: "SOLIDWORKS Add-Ins", width: "w-[172px]" },
  { label: "MBD", width: "w-[57px]" },
];

const repeat = (label: string, count: number) => Array.from({ length: count }, () => label);

const components = [
  "(f) 5_Box Carrier<1> (Defau",
  "(-) 4_Ring Gear 64T4M<1>",
  "(-) 6_Box Pin<1> ->? (Defa",
  "(-) 6_Box Pin<2> ->? (Defa",
  "(-) 6_Box Pin<3> ->? (Defa",
  ...repeat("(-) 7_Box Needle Bearing<", 5),
  "(-) 2_Extended Sun Gear 20",
  "(-) 3_Planet Gear 22T4M<1",
  "(-) 3_Planet Gear 22T4M<2",
  "(-) 3_Planet Gear 22T4M<3",
  ...repeat("(-) socket head cap screw_", 10),
];

const coverTree = [...components, ...repeat("(-) circlip for shafts normal", 2)];
const gearTree = ["(f) 1_Box Cover<2> (Defau", ...components, "(-) circlip for shafts normal"];

/* ---------- window parts ---------- */

function IconButton({ label, width = "w-6", children }: { label: string; width?: string; children: ReactNode }) {
  return (
    <button aria-label={label} className={clsx("flex h-6 shrink-0 items-center justify-center", width)}>
      {children}
    </button>
  );
}

function TitleBar({ id }: { id: string }) {
  return (
    <header className="flex h-[41px] items-center border-t border-b border-[#b5b5b5]">
      <div className="flex h-full w-[146px] items-center border-r border-[#b5b5b5] pl-1 text-[#cf3a3a]">
        <Brand />
        <span className="ml-1 font-[Lato] text-[14px] font-light italic">
          <b className="font-black">SOLID</b>WORKS
        </span>
        <svg width="6" height="10" viewBox="0 0 6 10" className="mr-1.5 ml-auto" aria-hidden="true">
          <path d="M0 0l6 5-6 5z" fill="#8a8a8a" />
        </svg>
      </div>
      <div className="flex items-center pl-6">
        <IconButton label="Home" width="w-[33px] pr-[9px]"><Home /></IconButton>
        <IconButton label="New"><NewDoc /></IconButton>
        <Caret />
        <IconButton label="Open"><OpenDoc /></IconButton>
        <Caret />
        <IconButton label="Save"><Save /></IconButton>
        <Caret />
        <IconButton label="Print"><Print /></IconButton>
        <Caret />
        <IconButton label="Undo"><Undo /></IconButton>
        <Caret />
        <IconButton label="Redo"><Redo /></IconButton>
        <Caret faint className="w-[18px] justify-center" />
        <div className="flex h-8 border border-[#6f6f6f]">
          <button aria-label="Select" className="flex w-8 items-center justify-center border-r border-[#6f6f6f] bg-[#b3b3b3]">
            <Cursor />
          </button>
          <Caret className="w-3 justify-center bg-white" />
        </div>
        <IconButton label="Rebuild" width="w-[34px]"><Traffic /></IconButton>
        <IconButton label="File Properties" width="w-[33px]"><OptionList /></IconButton>
        <IconButton label="Options" width="w-[33px]"><Gear /></IconButton>
        <Caret className="w-3 justify-center" />
      </div>
      <h1 className="flex-1 pl-[249px] text-[17px] whitespace-nowrap text-[#222]">Planetary Gear Final Exploded.SLDASM *</h1>
      <div className="flex items-center">
        <div className="flex h-7 w-[251px] items-center border border-[#b5b5b5] bg-white pl-1.5">
          <span className="flex size-[18px] items-center justify-center rounded-[2px] bg-[#2b2b2b]">
            <svg width="14" height="12" viewBox="0 0 14 12" fill="none" stroke="#fff" strokeWidth="1.500" aria-hidden="true">
              <path d="M2 1l4 4.500L2 10M7 11h6" />
            </svg>
          </span>
          <label htmlFor={`search-${id}`} className="sr-only">Search Commands</label>
          <input
            id={`search-${id}`}
            placeholder="Search Commands"
            className="min-w-0 flex-1 pl-2 text-[14px] outline-none placeholder:text-[#6b6b6b]"
          />
          <Svg size={18}>
            <circle cx="8" cy="8" r="6" stroke="#777" strokeWidth="1.500" />
            <path d="M12.500 12.500 18.500 19" stroke="#777" strokeWidth="2" />
          </Svg>
          <Caret faint className="w-[18px] justify-center" />
        </div>
        <div className="flex pl-1">
          <IconButton label="Account" width="w-[41px]"><User /></IconButton>
          <IconButton label="Help" width="w-[41px]"><Help /></IconButton>
          <IconButton label="Minimize" width="w-[41px]"><Minimize color="#444" /></IconButton>
          <IconButton label="Restore" width="w-[41px]"><Restore color="#444" /></IconButton>
          <IconButton label="Close" width="w-[41px]"><Close color="#444" /></IconButton>
        </div>
        <div className="w-[5px]" />
      </div>
    </header>
  );
}

function ToolBar() {
  return (
    <div className="flex h-8 border-b border-[#b5b5b5]">
      <div className="flex items-center border-r border-[#8a8a8a] pr-2 pb-px">
        <span className="mr-2 ml-1 h-7 border-l-2 border-dotted border-[#a5a5a5]" />
        <IconButton label="Toolbox" width="w-[27px]"><HeatSink /></IconButton>
        <IconButton label="Appearance" width="w-[27px]"><Sphere /></IconButton>
        <IconButton label="Mass Properties" width="w-[27px]"><MassShapes /></IconButton>
        <IconButton label="Gear Mate" width="w-[27px]"><TwoGears /></IconButton>
        <IconButton label="Clearance" width="w-[27px]"><Clamp /></IconButton>
        <IconButton label="Simulation" width="w-[27px]"><RainbowPart /></IconButton>
        <Caret className="w-[23px] justify-end pr-1" />
        <IconButton label="Fastener" width="w-[27px]"><Screw /></IconButton>
        <IconButton label="Measure" width="w-[27px]"><FitHeight /></IconButton>
        <IconButton label="Plate" width="w-[27px]"><FaintPlate /></IconButton>
        <IconButton label="Pattern" width="w-[27px]"><CycleP /></IconButton>
        <Caret className="w-[23px] justify-end pr-1" />
        <IconButton label="Split" width="w-[27px]"><FaintPart /></IconButton>
      </div>
    </div>
  );
}

function Ribbon() {
  return (
    <div className="flex h-[82px] border-b border-[#7d7d7d]">
      {commands.map((c) => (
        <button
          key={c.label[0]}
          disabled={c.disabled}
          className={clsx(
            "flex shrink-0 flex-col items-center pt-[6px] text-[17px] leading-[25px] whitespace-nowrap",
            c.width,
            c.divider && "border-r border-[#bcbcbc]",
            c.disabled ? "text-[#b4b4b4]" : "text-[#1c1c1c]",
          )}
        >
          {c.icon}
          <span className="mt-[2px]">{c.label[0]}</span>
          {c.menu ? <Caret className="h-[30px] justify-center" /> : <span>{c.label[1]}</span>}
        </button>
      ))}
      <div className="ml-auto flex flex-col items-center justify-between pt-4 pr-[6px] pb-1">
        <span className="text-[20px] leading-none text-[#444]">»</span>
        <Svg size={16}>
          <path d="M4 13l6-6 6 6" stroke="#222" strokeWidth="2.400" />
        </Svg>
      </div>
    </div>
  );
}

function TabRow() {
  return (
    <div className="flex h-7 items-stretch bg-white">
      <div role="tablist" className="flex border-b border-[#7d7d7d]">
        {commandTabs.map((tab, i) => (
          <button
            key={tab.label}
            role="tab"
            aria-selected={i === 0}
            className={clsx(
              "border-r border-[#7d7d7d] text-[14px] whitespace-nowrap",
              tab.width,
              i === 0 ? "bg-[#f7f7f7] font-bold text-[#222]" : "bg-[#d4d4d4] text-[#333]",
            )}
          >
            {tab.label}
          </button>
        ))}
      </div>
      <div className="ml-[330px] flex items-center pt-[2px] opacity-90">
        <IconButton label="Zoom to Fit" width="w-[26px]"><ZoomFit /></IconButton>
        <IconButton label="Zoom to Area" width="w-[26px]"><ZoomArea /></IconButton>
        <IconButton label="Previous View" width="w-[26px]"><PrevView /></IconButton>
        <IconButton label="Section View" width="w-[26px]"><Section /></IconButton>
        <IconButton label="Annotations" width="w-[26px]"><Annot /></IconButton>
        <IconButton label="View Orientation" width="w-[26px]"><Orient /></IconButton>
        <Caret faint className="w-[14px] justify-center" />
        <IconButton label="Display Style" width="w-[26px]"><Display /></IconButton>
        <Caret faint className="w-[14px] justify-center" />
        <div className="flex h-[25px] border border-[#8a8a8a]">
          <button aria-label="Hide or Show" className="flex w-[25px] items-center justify-center bg-[#b9b9b9]"><Eye /></button>
          <Caret className="w-3 justify-center bg-[#ececec]" />
        </div>
        <IconButton label="Edit Appearance" width="w-[27px]"><BallPencil /></IconButton>
        <IconButton label="Apply Scene" width="w-[26px]"><BallScene /></IconButton>
        <Caret faint className="w-[14px] justify-center" />
        <IconButton label="View Settings" width="w-[26px]"><Monitor /></IconButton>
        <Caret faint className="w-[14px] justify-center" />
      </div>
      <div className="ml-auto flex items-center pt-[2px] pr-[6px]">
        <IconButton label="Dock Left" width="w-[26px]"><Dock /></IconButton>
        <IconButton label="Dock Right" width="w-[26px]"><Dock flip /></IconButton>
        <IconButton label="Minimize Document" width="w-[26px]"><Minimize color="#999" /></IconButton>
        <IconButton label="Restore Document" width="w-[26px]"><Restore color="#999" /></IconButton>
        <IconButton label="Close Document" width="w-[26px]"><Close color="#999" /></IconButton>
      </div>
    </div>
  );
}

const panelTabs = [
  { label: "Feature Tree", icon: <AssemblyPart /> },
  { label: "Properties", icon: <OptionList /> },
  { label: "Configurations", icon: <ConfigTree /> },
  { label: "Dimensions", icon: <Target /> },
  { label: "Display", icon: <Ball /> },
];

function FeatureTree({ rows, thumbTop }: { rows: string[]; thumbTop: number }) {
  return (
    <aside className="flex w-[273px] shrink-0 flex-col border-r border-[#7d7d7d]">
      <div className="mt-1 mb-1 flex h-[21px] items-center justify-center border-t border-b border-[#c4c4c4] pr-1">
        <span className="size-[6px] rounded-full border-2 border-[#b0b0b0]" />
      </div>
      <div className="flex h-[26px] border-b border-[#b5b5b5] pl-[2px]">
        {panelTabs.map((tab, i) => (
          <button
            key={tab.label}
            aria-label={tab.label}
            className={clsx(
              "flex w-10 items-center justify-center border-t border-r border-[#8a8a8a]",
              i > 0 && "bg-[#d2d2d2]",
            )}
          >
            {tab.icon}
          </button>
        ))}
        <button aria-label="More tabs" className="ml-auto flex w-5 items-center">
          <Svg size={16}>
            <path d="M5 4l7 6-7 6" stroke="#222" strokeWidth="2.400" />
          </Svg>
        </button>
      </div>
      <div className="mx-[5px] flex h-[31px] items-center border border-[#c4c4c4] pl-[2px]">
        <Filter />
        <Caret className="pt-2" />
      </div>
      <div className="relative mt-[2px] flex-1">
        <ul className="w-[250px] text-[16px] leading-[26px] text-[#222]">
          {rows.map((row, i) => (
            <li key={i} className="flex h-[26px] items-center whitespace-nowrap">
              <svg width="4" height="8" viewBox="0 0 4 8" className="ml-[10px] shrink-0" aria-hidden="true">
                <path d="M0 0l4 4-4 4z" fill="#555" />
              </svg>
              <span className="mr-1 ml-3 flex w-5 shrink-0 justify-center">
                {/screw|circlip/.test(row) ? <Screw size={19} /> : <Part />}
              </span>
              {row}
            </li>
          ))}
        </ul>
        <span className="absolute right-[10px] h-[437px] w-[3px] rounded-full bg-[#858585]" style={{ top: thumbTop }} />
      </div>
      <div className="mb-[2px] flex h-[22px] items-center border-b border-[#c4c4c4] bg-[#eee] pb-1 pl-[22px]">
        <span className="h-[3px] w-[77px] rounded-full bg-[#858585]" />
      </div>
    </aside>
  );
}

const taskPane = [
  { label: "Resources", icon: <Home /> },
  { label: "Design Library", icon: <Library /> },
  { label: "File Explorer", icon: <Folder /> },
  { label: "View Palette", icon: <Palette /> },
  { label: "Appearances", icon: <Ball /> },
  { label: "Custom Properties", icon: <OptionList /> },
];

function Viewport({ children }: { children: ReactNode }) {
  return (
    <main className="relative flex flex-1 items-center justify-center bg-white pr-1 pb-[30px]">
      <div className="absolute inset-y-0 left-0 flex items-center pb-7">
        <button
          aria-label="Collapse panel"
          className="-ml-px flex h-[49px] w-3 items-center justify-center border border-l-0 border-[#8a8a8a] bg-[#f7f7f7]"
        >
          <span className="size-[6px] rounded-full border-2 border-[#b0b0b0]" />
        </button>
      </div>
      {children}
      <div className="absolute top-[29px] right-0 flex flex-col border-t border-l border-[#7d7d7d]">
        {taskPane.map((item, i) => (
          <button
            key={item.label}
            aria-label={item.label}
            className={clsx(
              "flex h-[30px] w-8 items-center justify-center border-b border-[#7d7d7d]",
              i > 0 && "bg-[#d2d2d2]",
            )}
          >
            {item.icon}
          </button>
        ))}
      </div>
      <div className="absolute bottom-0 left-[3px] leading-none">
        <span className="block pl-11 font-[Inter] text-[12px] text-[#6f9a6f]">Y</span>
        <div className="-mt-1 flex items-end">
          <span className="pb-2 font-[Inter] text-[12px] leading-[14px] text-[#d28a8a]">X</span>
          <div className="-ml-1">
            <Triad />
          </div>
        </div>
        <span className="mt-9 mb-[2px] ml-2 block font-[Lato] text-[18px] leading-[18px] font-bold text-[#111]">*Back</span>
      </div>
    </main>
  );
}

function SheetTabs() {
  return (
    <div className="flex h-5 border-t border-b border-[#7d7d7d] text-[15px] leading-[18px] text-[#333]">
      <div className="flex w-[82px] gap-px bg-[#8b8da3] pl-[2px]">
        {["M5 2v10M13 2 7 7l6 5z", "M12 2 6 7l6 5z", "M6 2l6 5-6 5z", "M13 2v10M5 2l6 5-6 5z"].map((d) => (
          <button key={d} aria-label="Scroll sheets" className="flex flex-1 items-center justify-center bg-[#a3a5ba]">
            <svg width="18" height="14" viewBox="0 0 18 14" fill="#85879c" stroke="#85879c" aria-hidden="true">
              <path d={d} />
            </svg>
          </button>
        ))}
      </div>
      <button className="w-[76px] pl-1 font-bold text-[#111]">Model</button>
      <button className="w-[90px] border-r border-l border-[#7d7d7d] bg-[#d4d4d4]">3D Views</button>
      <button className="w-[144px] border-r border-[#7d7d7d] bg-[#d4d4d4] pl-3 text-left">Motion Study 2</button>
    </div>
  );
}

function StatusBar() {
  return (
    <footer className="flex h-6 items-center overflow-hidden pt-1 text-[16px] leading-5 text-[#222]">
      <span className="flex-1 pl-px">SOLIDWORKS Premium 2022 SP1.0</span>
      <span className="w-[129px]">Under Defined</span>
      <span className="w-[149px]">Editing Assembly</span>
      <span className="flex h-5 w-5 items-center border-r border-[#c4c4c4]"><Traffic size={15} /></span>
      <span className="w-[97px]" />
      <span className="w-[72px]">MMGS</span>
      <svg width="6" height="4" viewBox="0 0 6 4" aria-hidden="true">
        <path d="M0 4h6L3 0z" fill="#333" />
      </svg>
      <span className="flex w-[46px] justify-end pr-[3px]"><Tag /></span>
    </footer>
  );
}

interface CadWindowProps {
  id: string;
  rows: string[];
  thumbTop: number;
  children: ReactNode;
}

function CadWindow({ id, rows, thumbTop, children }: CadWindowProps) {
  return (
    <section className="flex flex-col overflow-hidden bg-[#f7f7f7]">
      <TitleBar id={id} />
      <ToolBar />
      <Ribbon />
      <TabRow />
      <div className="flex flex-1">
        <FeatureTree rows={rows} thumbTop={thumbTop} />
        <Viewport>{children}</Viewport>
      </div>
      <SheetTabs />
      <StatusBar />
    </section>
  );
}

export default function App() {
  return (
    <div className="relative grid min-h-screen grid-rows-2 font-['Noto_Sans',sans-serif]">
      <CadWindow id="cover" rows={coverTree} thumbTop={171}>
        <CoverModel />
      </CadWindow>
      <CadWindow id="gears" rows={gearTree} thumbTop={153}>
        <GearModel />
      </CadWindow>
      <div className="pointer-events-none absolute top-1/2 left-1/2 flex -translate-x-1/2 -translate-y-1/2 items-end pl-1 text-white/70">
        <span className="font-['Noto_Sans_CJK_SC',sans-serif] text-[66px] leading-[72px] font-light">莫西网</span>
        <span className="font-['Liberation_Mono',monospace] text-[60px] leading-[60px]">www.3dmox.com</span>
      </div>
    </div>
  );
}
